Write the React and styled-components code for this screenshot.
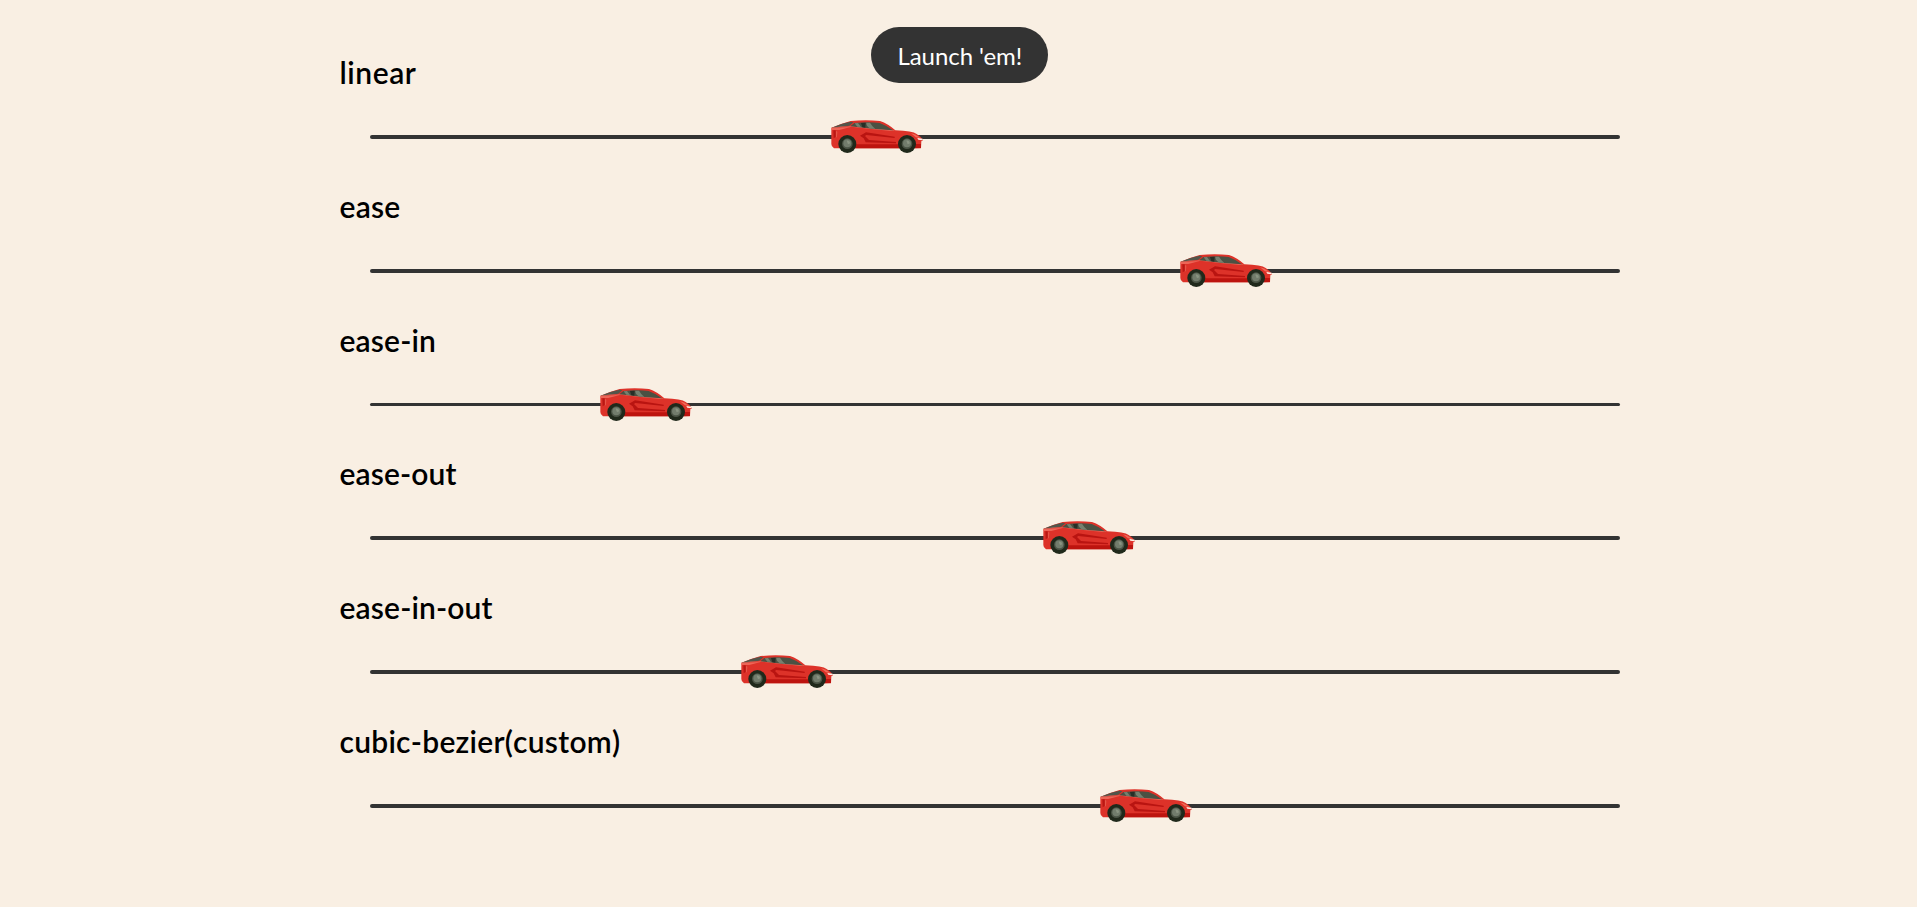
import React from "react";
import styled, { createGlobalStyle } from "styled-components";

const GlobalStyle = createGlobalStyle`
  body { margin: 0; background: #f9efe3; font-family: Lato, sans-serif; }
`;

const Page = styled.main`
  position: relative;
  box-sizing: border-box;
  width: 1278px;
  height: 907px;
  margin-left: 339px;
  padding-top: 46px;
`;

const LaunchButton = styled.button`
  position: absolute;
  top: 27px;
  left: 532.3px;
  width: 177px;
  height: 56px;
  padding: 0;
  border: 0;
  border-radius: 28px;
  background: #333;
  color: #fff;
  font: 400 24px Lato, sans-serif;
  letter-spacing: -0.05px;
`;

const Lane = styled.section`
  height: 133.8px;
`;

const LaneTitle = styled.h2`
  margin: 0 0 0 0.5px;
  font-size: 30px;
  font-weight: 600;
  font-kerning: none;
  letter-spacing: ${(p) => p.$tracking}px;
  line-height: 52px;
  color: #000;
`;

const Track = styled.div`
  display: flex;
  align-items: center;
  position: relative;
  height: 36px;
  margin: 21px 0 0 31.3px;
  width: 1250px;

  &::before {
    content: "";
    position: absolute;
    top: 16px;
    left: 0;
    width: 100%;
    height: ${(p) => p.$line}px;
    border-radius: 2px;
    background: #333;
  }
`;

const Car = styled.svg`
  display: block;
  position: relative;
  width: 94px;
  height: 36px;
  margin-left: ${(p) => p.$travel}px;
`;

function SportsCar({ travel }) {
  return (
    <Car $travel={travel} viewBox="30 27 282 108" aria-hidden="true">
      <path d="M35 53 Q66 40 92 33 Q138 29 180 33 Q204 41 226 61 Q278 63 290 72 Q304 80 309 91 L304 94 L303 115 L42 115 Q34 110 34 102 L34 62Z" fill="#dd3229" />
      <path d="M102 103 L238 103 L238 115 L102 115Z M284 102 L303 102 L303 114 L284 115Z" fill="#bd140f" />
      <path d="M35 53 Q66 39 92 35 L100 37 L88 47 Q60 50 37 55Z" fill="#52554a" />
      <path d="M35 55 Q66 48 94 50 Q152 57 216 63 L228 62 Q190 56 150 53 Q90 43 35 53Z" fill="#e96c5c" />
      <path d="M34 53 L92 51 L58 60 L34 60Z" fill="#ed6557" />
      <path d="M91 49 L103 39 Q147 35 179 39 Q201 47 219 61 Q153 57 91 49Z" fill="#4b5143" />
      <path d="M104 40 L114 39 L123 51 L112 50Z M139 38 L150 38 Q155 47 166 57 L149 55 Q138 47 139 38Z" fill="#76806f" />
      <path d="M123 39 L137 38 L136 53 L127 52Z" fill="#272f27" />
      <path d="M40 61 L47 61 L47 81 L41 85Z" fill="#b91814" />
      <path d="M48 62 L52 65 L51 79 L48 84Z" fill="#e65547" />
      <path d="M120 77 L138 67 L153 69 L224 80 L224 84 L139 75 L135 78 L147 90 L228 96 L228 100 L137 97 L131 85Z" fill="#b91411" />
      <path d="M273 70 Q293 76 301 84 L288 82Z" fill="#f06c5a" />
      <path d="M292 84 L308 86 L307 91 L295 89Z" fill="#fff0e6" />
      {[82, 261].map((x) => (
        <g key={x}>
          <circle cx={x} cy="102" r="27" fill="#20291b" />
          <circle cx={x} cy="101" r="16" fill="#4b5446" />
          <circle cx={x} cy="100" r="12" fill="#727c6c" />
          <path d={`M${x - 2} 92 Q${x + 7} 90 ${x + 9} 100 L${x + 2} 103Z`} fill="#8a9482" />
        </g>
      ))}
    </Car>
  );
}

const lanes = [
  { name: "linear", travel: 460, tracking: 0.55 },
  { name: "ease", travel: 809, tracking: 0.2 },
  { name: "ease-in", travel: 229.2, line: 3, tracking: 0.15 },
  { name: "ease-out", travel: 672, tracking: 0.13 },
  { name: "ease-in-out", travel: 370, tracking: 0.15 },
  { name: "cubic-bezier(custom)", travel: 729.2, tracking: 0.26 },
];

export default function App() {
  return (
    <Page>
      <GlobalStyle />
      <LaunchButton>Launch 'em!</LaunchButton>
      {lanes.map((lane) => (
        <Lane key={lane.name}>
          <LaneTitle $tracking={lane.tracking}>{lane.name}</LaneTitle>
          <Track $line={lane.line ?? 4}>
            <SportsCar travel={lane.travel} />
          </Track>
        </Lane>
      ))}
    </Page>
  );
}
